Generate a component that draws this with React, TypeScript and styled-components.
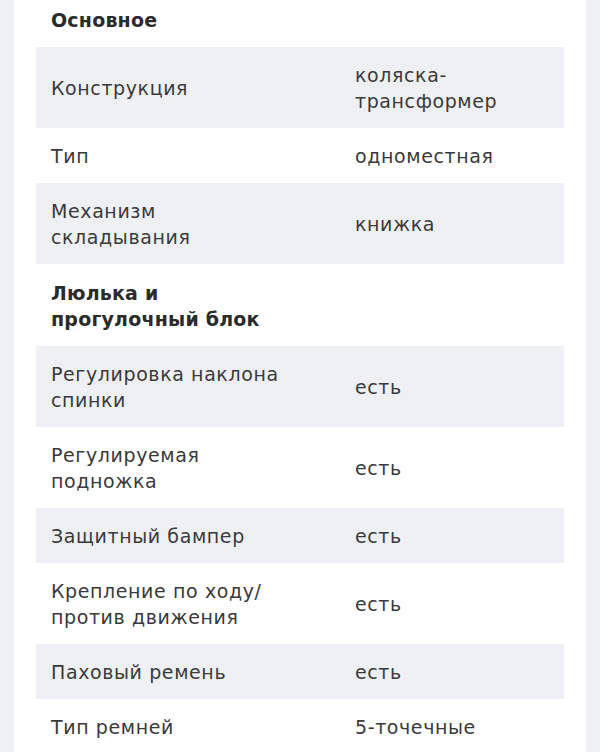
import styled, { createGlobalStyle } from "styled-components";

const GlobalStyle = createGlobalStyle`
  html, body {
    margin: 0;
    padding: 0;
    background: #f0f1f5;
  }
  body {
    font-family: "DejaVu Sans", "Noto Sans", sans-serif;
    color: #333333;
    overflow: hidden;
  }
`;

const Panel = styled.div`
  margin: -9px 14px 0;
  padding: 0 22px;
  background: #ffffff;
  min-height: 800px;
`;

const Group = styled.section`
  display: flex;
  flex-direction: column;
`;

const GroupTitle = styled.h3`
  margin: 0;
  padding: 16px 15px 14px;
  max-width: 236px;
  font-size: 19px;
  line-height: 26px;
  letter-spacing: 0.2px;
  font-weight: 700;
  color: #2b2b2b;
`;

const Row = styled.div<{ $shaded: boolean }>`
  display: grid;
  grid-template-columns: 304px 1fr;
  align-items: center;
  background: ${(p) => (p.$shaded ? "#eff0f4" : "#ffffff")};
`;

const Cell = styled.div`
  padding: 14.5px 15px;
  font-size: 19px;
  line-height: 26px;
  letter-spacing: 0.6px;
  color: #3a3a3a;
`;

const Label = styled(Cell)`
  max-width: 238px;
`;

type Spec = { label: string; value: string };

const groups: { title: string; items: Spec[] }[] = [
  {
    title: "Основное",
    items: [
      { label: "Конструкция", value: "коляска-трансформер" },
      { label: "Тип", value: "одноместная" },
      { label: "Механизм складывания", value: "книжка" },
    ],
  },
  {
    title: "Люлька и прогулочный блок",
    items: [
      { label: "Регулировка наклона спинки", value: "есть" },
      { label: "Регулируемая подножка", value: "есть" },
      { label: "Защитный бампер", value: "есть" },
      { label: "Крепление по ходу/ против движения", value: "есть" },
      { label: "Паховый ремень", value: "есть" },
      { label: "Тип ремней", value: "5-точечные" },
    ],
  },
];

export default function App() {
  return (
    <>
      <GlobalStyle />
      <Panel>
        {groups.map((g) => (
          <Group key={g.title}>
            <GroupTitle>{g.title}</GroupTitle>
            {g.items.map((it, i) => (
              <Row key={it.label} $shaded={i % 2 === 0}>
                <Label>{it.label}</Label>
                <Cell>{it.value}</Cell>
              </Row>
            ))}
          </Group>
        ))}
      </Panel>
    </>
  );
}
